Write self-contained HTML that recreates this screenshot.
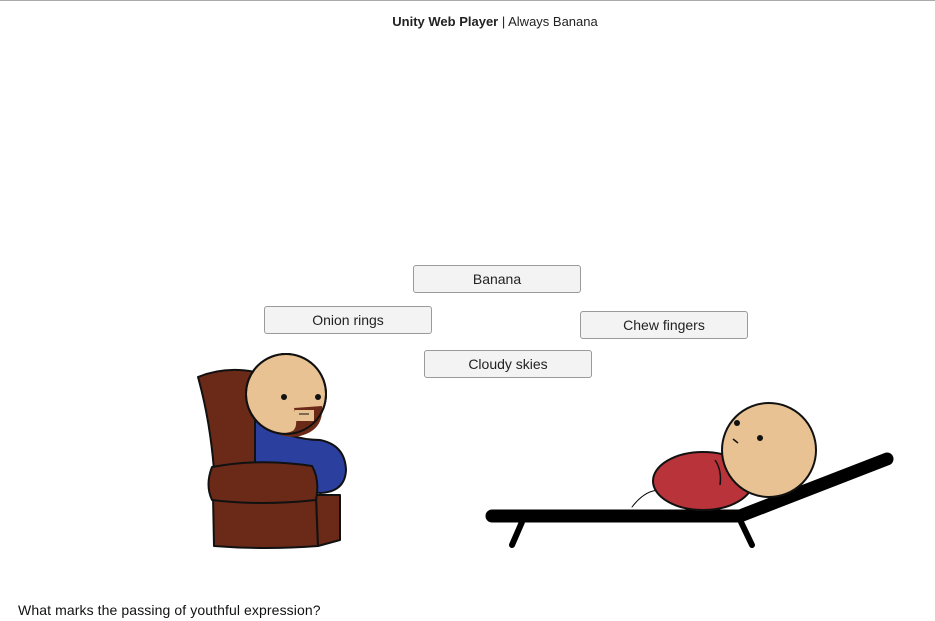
<!DOCTYPE html>
<html><head><style>
html,body{margin:0;padding:0;background:#fff;}
body{width:935px;height:621px;position:relative;overflow:hidden;font-family:"Liberation Sans",Arial,sans-serif;}
.top{position:absolute;left:0;top:0;width:935px;height:1px;border-top:1px solid #aaa;}
.hdr{position:absolute;top:14px;left:0;width:990px;text-align:center;font-size:13px;color:#222;}
.btn{position:absolute;width:166px;height:26px;background:#f3f3f3;border:1px solid #9a9a9a;border-radius:3px;font-size:14px;color:#222;text-align:center;line-height:26px;}
.q{position:absolute;left:18px;top:602px;font-size:14px;letter-spacing:0.1px;color:#111;}
svg{position:absolute;left:0;top:0;}
</style></head><body>
<div class="top"></div>
<div class="hdr"><b>Unity Web Player</b> | Always Banana</div>
<svg width="935" height="621">
<g stroke="#111" stroke-width="2" stroke-linejoin="round">
<path d="M198,377 Q225,366 255,372 L260,470 L214,470 Q210,420 198,377 Z" fill="#6b2a18"/>
<path d="M255,420 Q290,440 320,440 Q345,445 346,470 Q345,492 320,493 L255,480 Z" fill="#2b3f9e"/>
<circle cx="286" cy="394" r="40" fill="#e9c293"/>
<path d="M262,424 Q275,436 290,432 Q300,430 294,408 L322,406 Q324,430 300,436 Q280,440 262,424 Z" fill="#6b2a18" stroke="none"/>
<rect x="295" y="410" width="19" height="11" fill="#e9c293" stroke="none"/>
<line x1="299" y1="414" x2="309" y2="414" stroke-width="1"/>
<circle cx="286" cy="394" r="40" fill="none"/>
<path d="M213,495 L316,495 L318,546 Q265,550 214,546 Z" fill="#6b2a18"/>
<path d="M316,495 L340,495 L340,540 L318,546 Z" fill="#6b2a18"/>
<path d="M212,467 Q260,458 312,466 Q320,480 316,500 Q260,506 212,500 Q205,485 212,467 Z" fill="#6b2a18"/>
</g>
<circle cx="284" cy="397" r="3" fill="#111"/><circle cx="318" cy="397" r="3" fill="#111"/>
<g stroke="#000" stroke-linecap="round" fill="none">
<path d="M492,516 L740,516 L887,459" stroke-width="13"/>
<line x1="522" y1="522" x2="512" y2="545" stroke-width="6"/>
<line x1="741" y1="522" x2="752" y2="545" stroke-width="6"/>
<path d="M632,507 Q645,490 660,490" stroke-width="1"/>
</g>
<g stroke="#111" stroke-width="2">
<ellipse cx="703" cy="481" rx="50" ry="29" fill="#b8343a"/>
<circle cx="769" cy="450" r="47" fill="#e9c293"/>
</g>
<path d="M715,460 Q722,470 720,485" stroke="#111" fill="none" stroke-width="1.5"/>
<path d="M733,439 L738,443" stroke="#111" stroke-width="1.5"/>
<circle cx="737" cy="423" r="3" fill="#111"/><circle cx="760" cy="438" r="3" fill="#111"/>
</svg>
<div class="btn" style="left:413px;top:265px">Banana</div>
<div class="btn" style="left:264px;top:306px">Onion rings</div>
<div class="btn" style="left:580px;top:311px">Chew fingers</div>
<div class="btn" style="left:424px;top:350px">Cloudy skies</div>
<div class="q">What marks the passing of youthful expression?</div>
</body></html>
